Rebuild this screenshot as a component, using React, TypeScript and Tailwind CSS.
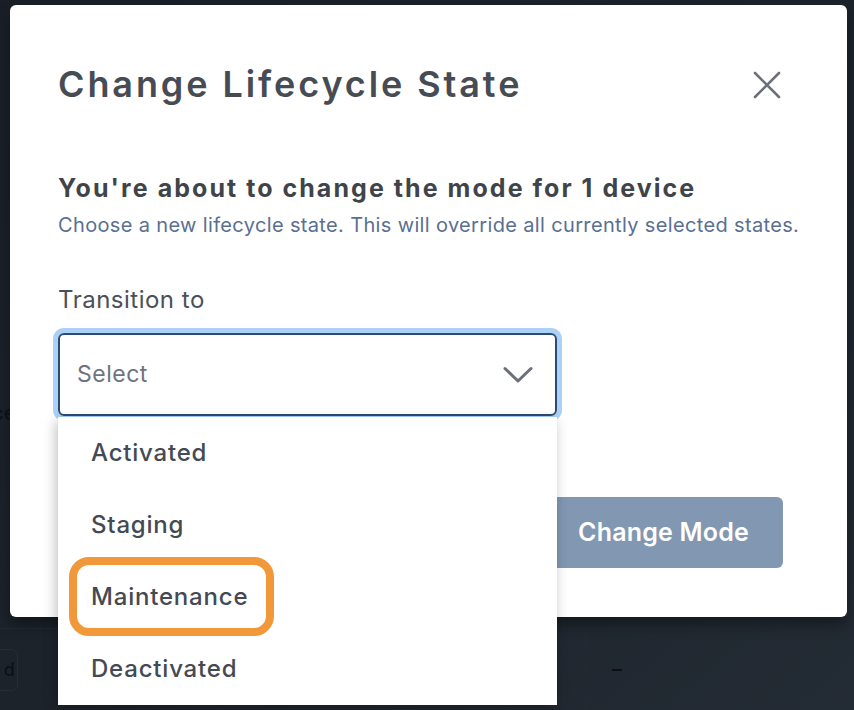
import React from 'react';

const options = ['Activated', 'Staging', 'Maintenance', 'Deactivated'];

const font = { fontFamily: 'Inter, "Open Sans", sans-serif' };

const CloseIcon = () => (
  <svg width="28" height="28" viewBox="0 0 28 28" fill="none">
    <path d="M2 2L26 26M26 2L2 26" stroke="#6b7079" strokeWidth="2.6" strokeLinecap="round" />
  </svg>
);

const Chevron = () => (
  <svg width="30" height="18" viewBox="0 0 30 18" fill="none">
    <path d="M2 2.5L15 15L28 2.5" stroke="#6b7079" strokeWidth="3" strokeLinecap="round" strokeLinejoin="round" />
  </svg>
);

// the devices table that sits behind the overlay
const Backdrop = () => (
  <div className="flex h-full flex-col bg-gradient-to-br from-[#1a1f27] via-[#1d232b] to-[#232b34]">
    <div className="h-[398px]" />
    <div className="-ml-[8px] text-[20px] font-semibold text-[#0e1217]">ce</div>
    <div className="flex-1" />
    <div className="grid h-[82px] grid-cols-[585px_1fr] border-t border-[#232a33]">
      <div className="flex items-center">
        <div className="-ml-[30px] flex h-[42px] w-[48px] items-center justify-end rounded-md border border-[#262d36] pr-[2px] text-[18px] font-medium text-[#0d1116]">
          d
        </div>
      </div>
      <div className="flex items-center border-l border-[#232a33] pl-[26px]">
        <span className="h-[2px] w-[10px] bg-[#0d1116]" />
      </div>
    </div>
  </div>
);

export default function App() {
  return (
    <div className="relative h-[710px] w-[854px] overflow-hidden" style={font}>
      <Backdrop />

      <div className="absolute left-[10px] top-[5px] h-[612px] w-[837px] rounded-md bg-white pl-[48px] pr-[64px] pt-[59px] shadow-[0_8px_14px_rgba(0,0,0,0.35)]">
        <div className="flex items-center justify-between">
          <h2 className="text-[36px] font-semibold leading-[40px] tracking-[2.9px] text-[#474c54]">Change Lifecycle State</h2>
          <button className="mr-[2px] mt-[2px]">
            <CloseIcon />
          </button>
        </div>

        <h3 className="mt-[69px] text-[25px] font-bold leading-[30px] tracking-[2.05px] text-[#3f444b]">
          You're about to change the mode for 1 device
        </h3>
        <p className="mt-[9px] whitespace-nowrap text-[20px] leading-[26px] tracking-[0.35px] text-[#5a6f91]">
          Choose a new lifecycle state. This will override all currently selected states.
        </p>

        <label className="mt-[47px] block text-[24px] leading-[30px] tracking-[0.5px] text-[#4b5058]">Transition to</label>
        <div className="relative mt-[18px] w-[499px]">
          <div className="flex h-[83px] items-center justify-between rounded-[6px] border-2 border-[#2c4b72] pl-[17px] pr-[22px] shadow-[0_0_0_5px_#abd1f6]">
            <span className="text-[23px] tracking-[0.5px] text-[#6f747c]">Select</span>
            <Chevron />
          </div>

          <ul className="absolute left-0 top-[84px] z-10 w-[499px] bg-white shadow-[-2px_4px_12px_rgba(0,0,0,0.25)]">
            {options.map((o) => (
              <li key={o} className="relative flex h-[72px] items-center pl-[33px] text-[24px] font-medium tracking-[0.8px] text-[#454a52]">
                {o}
                {o === 'Maintenance' && (
                  <span className="absolute left-[11px] top-[-4px] h-[79px] w-[205px] rounded-[20px] border-[8px] border-[#f0983a]" />
                )}
              </li>
            ))}
          </ul>
        </div>

        <div className="mt-[81px] flex justify-end gap-4">
          <button className="h-[71px] rounded-[6px] border border-[#c9d0d9] px-[34px] text-[25px] font-semibold text-[#4b5058]">Cancel</button>
          <button className="h-[71px] rounded-[6px] bg-[#8297b1] px-[34px] text-[25px] font-semibold tracking-[0.2px] text-white">
            Change Mode
          </button>
        </div>
      </div>
    </div>
  );
}
